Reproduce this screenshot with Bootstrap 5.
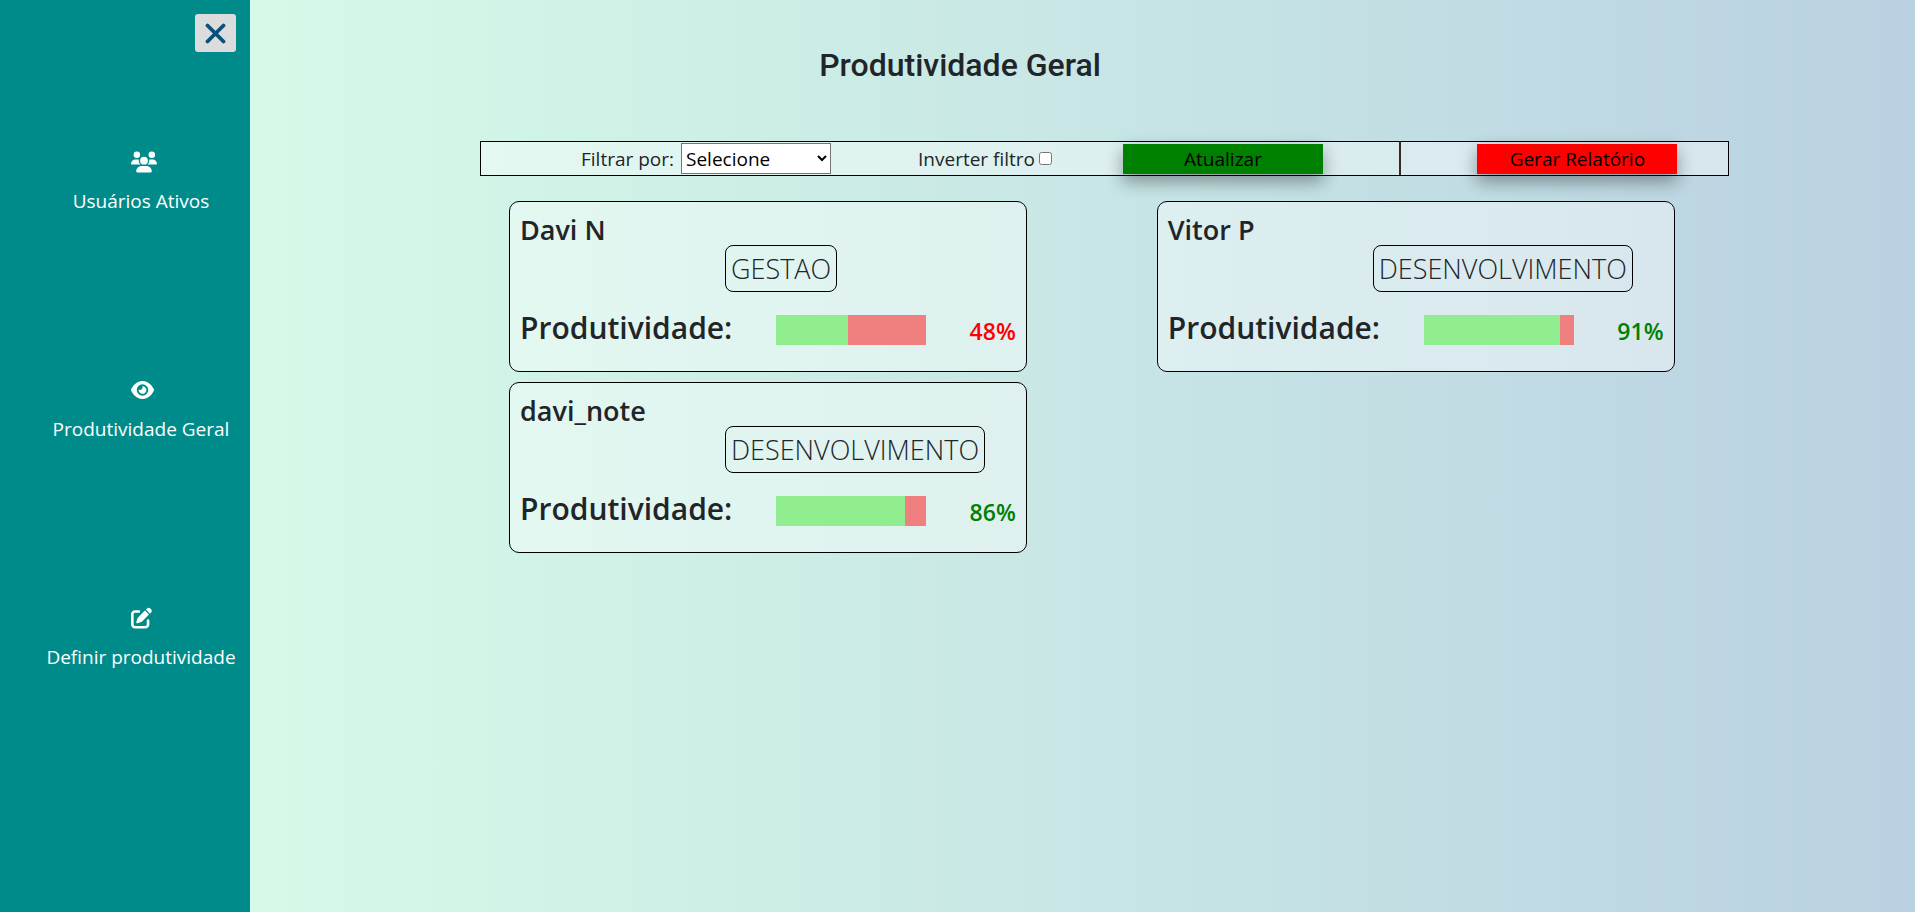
<!DOCTYPE html>
<html lang="pt-BR">
<head>
<meta charset="utf-8">
<meta name="viewport" content="width=device-width, initial-scale=1">
<title>Produtividade Geral</title>
<link href="https://cdn.jsdelivr.net/npm/bootstrap@5.3.0/dist/css/bootstrap.min.css" rel="stylesheet">
<style>
  body { font-family: "Open Sans", "Noto Sans", sans-serif; color: #212529; }
  .app-shell { min-height: 100vh; }
  .side-panel { width: 250px; background: #008b8b; padding: 14px 14px 0; }
  .close-btn { width: 41px; height: 38px; background: #dcdcdc; border: 0; border-radius: 3px; color: #0b5078; }
  .side-links { margin-top: 98px; gap: 162px; padding-left: 32px; }
  .side-links a { color: #fff; font-size: 19px; line-height: 30px; gap: 12px; white-space: nowrap; }
  .link-icon { width: 20px; height: 24px; }
  .link-icon svg { height: 24px; flex: none; }
  .board { min-width: 0; background: linear-gradient(to right, #d5fae8, #c6e4e5 55%, #bad1e1); }
  .page-title { font-family: Roboto, sans-serif; font-size: 32px; font-weight: 500; line-height: 38px; margin: 46px 0 57px; padding-right: 245px; }
  .filter-bar { margin-left: 230px; width: 75%; height: 35px; border: 1px solid #000; background: rgba(255,255,255,.4); font-size: 19px; line-height: 30px; }
  .filter-main { border-right: 2px solid #3d2828; padding: 0 76px 0 100px; }
  .plain-select { width: 150px; height: 31px; margin-left: 7px; border: 1px solid #767676; border-radius: 0; background: #fff; color: #000; font-size: 19px; line-height: 24px; padding: 0; }
  .invert-group { margin: 0 71px 0 87px; }
  .flat-btn { width: 200px; height: 30px; border: 0; color: #000; line-height: 30px; padding: 0; box-shadow: 0 8px 16px rgba(0,0,0,.25), 0 6px 20px rgba(0,0,0,.15); }
  .btn-update { background: #008000; }
  .btn-report { background: #f00; }
  .filter-report { padding-left: 26px; }
  .people { margin: 25px 0 0 259px; width: 70%; display: grid; grid-template-columns: 1fr 1fr; gap: 10px 130px; }
  .person { border: 1px solid #000; border-radius: 10px; background: rgba(255,255,255,.4); padding: 12px 10px 24px; }
  .person h2 { font-size: 27px; font-weight: 600; line-height: 31px; margin: 0; }
  .sector { width: fit-content; margin-left: 205px; border: 1px solid #000; border-radius: 8px; font-size: 27px; font-weight: 300; line-height: 33px; padding: 6px 5px; }
  .score { margin-top: 23px; }
  .score h3 { font-size: 30px; font-weight: 600; line-height: 26px; margin: 0; }
  .meter { width: 150px; height: 30px; background: #f08080; }
  .meter-fill { height: 100%; background: #90ee90; }
  .pct { font-size: 23px; font-weight: 600; line-height: 32px; }
  .low { color: #f00; }
  .high { color: #008000; }
</style>
</head>
<body>
<div class="app-shell d-flex">
  <nav class="side-panel flex-shrink-0 d-flex flex-column">
    <button class="close-btn align-self-end d-flex align-items-center justify-content-center p-0" type="button" aria-label="Fechar">
      <svg width="21" height="21" viewBox="0 0 21 21" fill="none" stroke="currentColor" stroke-width="3.8" stroke-linecap="round"><path d="M2.500 2.500l16 16M18.500 2.500l-16 16"/></svg>
    </button>
    <div class="side-links d-flex flex-column align-items-center">
      <a class="d-flex flex-column align-items-center text-decoration-none" href="#">
        <span class="link-icon d-flex"><svg width="26" viewBox="0 0 640 512" fill="#fff"><path d="M144 0a80 80 0 1 1 0 160A80 80 0 1 1 144 0zM512 0a80 80 0 1 1 0 160A80 80 0 1 1 512 0zM0 298.7C0 239.8 47.800 192 106.700 192h42.700c15.900 0 31 3.500 44.600 9.700c-1.300 7.200-1.900 14.700-1.900 22.300c0 38.200 16.800 72.500 43.300 96H21.300C9.600 320 0 310.400 0 298.700zM405.300 320c26.600-23.500 43.300-57.800 43.300-96c0-7.600-.7-15-1.900-22.300c13.600-6.300 28.700-9.700 44.600-9.700h42.700C592.200 192 640 239.800 640 298.700c0 11.800-9.600 21.300-21.300 21.300zM224 224a96 96 0 1 1 192 0a96 96 0 1 1-192 0zM128 485.300C128 411.700 187.700 352 261.300 352h117.300C452.300 352 512 411.700 512 485.300c0 14.700-11.900 26.700-26.700 26.700H154.700c-14.700 0-26.700-11.900-26.700-26.700z"/></svg></span>
        <span>Usuários Ativos</span>
      </a>
      <a class="d-flex flex-column align-items-center text-decoration-none" href="#">
        <span class="link-icon d-flex"><svg width="23" viewBox="0 0 576 512" fill="#fff"><path d="M288 32c-80.800 0-145.500 36.800-192.600 80.600C48.600 156 17.300 208 2.500 243.700c-3.300 7.900-3.300 16.700 0 24.600C17.300 304 48.600 356 95.400 399.400C142.500 443.200 207.200 480 288 480s145.500-36.800 192.600-80.600c46.800-43.500 78.100-95.400 93-131.100c3.300-7.900 3.300-16.700 0-24.600c-14.900-35.700-46.200-87.700-93-131.100C433.500 68.800 368.800 32 288 32zM144 256a144 144 0 1 1 288 0 144 144 0 1 1-288 0zm144-64c0 35.300-28.700 64-64 64c-7.100 0-13.900-1.200-20.300-3.300c-5.500-1.800-11.900 1.600-11.700 7.400c.3 6.900 1.300 13.800 3.200 20.700c13.700 51.200 66.400 81.600 117.600 67.900s81.600-66.400 67.900-117.600c-11.100-41.500-47.800-69.400-88.600-71.100c-5.800-.2-9.200 6.100-7.400 11.700c2.100 6.400 3.300 13.200 3.300 20.300z"/></svg></span>
        <span>Produtividade Geral</span>
      </a>
      <a class="d-flex flex-column align-items-center text-decoration-none" href="#">
        <span class="link-icon d-flex"><svg width="21" viewBox="0 0 512 512" fill="#fff"><path d="M471.600 21.400c-21.900-21.900-57.300-21.900-79.200 0L362.300 51.700l97.900 97.900 30.100-30.100c21.900-21.900 21.900-57.300 0-79.200zM172.400 241.700c-6.100 6.100-10.800 13.600-13.500 21.900l-29.600 88.800c-2.900 8.600-.6 18.100 5.800 24.600s15.900 8.700 24.600 5.800l88.800-29.600c8.200-2.700 15.700-7.400 21.900-13.500L437.700 172.300 339.700 74.300zM96 64C43 64 0 107 0 160V416c0 53 43 96 96 96H352c53 0 96-43 96-96V320c0-17.700-14.300-32-32-32s-32 14.300-32 32v96c0 17.700-14.300 32-32 32H96c-17.700 0-32-14.300-32-32V160c0-17.700 14.300-32 32-32h96c17.700 0 32-14.300 32-32s-14.300-32-32-32z"/></svg></span>
        <span>Definir produtividade</span>
      </a>
    </div>
  </nav>
  <main class="board flex-grow-1">
    <h1 class="page-title text-center">Produtividade Geral</h1>
    <form class="filter-bar d-flex">
      <div class="filter-main d-flex align-items-center">
        <label for="filtro">Filtrar por:</label>
        <select class="plain-select" id="filtro"><option>Selecione</option></select>
        <div class="invert-group d-flex align-items-center">
          <label for="inverter">Inverter filtro</label>
          <input class="ms-1" type="checkbox" id="inverter">
        </div>
        <button class="flat-btn btn-update" type="button">Atualizar</button>
      </div>
      <div class="filter-report flex-grow-1 d-flex align-items-center justify-content-center">
        <button class="flat-btn btn-report" type="button">Gerar Relatório</button>
      </div>
    </form>
    <section class="people">
      <article class="person">
        <h2>Davi N</h2>
        <div class="sector">GESTAO</div>
        <div class="score d-flex justify-content-between">
          <h3>Produtividade:</h3>
          <div class="meter"><div class="meter-fill" style="width:48%"></div></div>
          <span class="pct low">48%</span>
        </div>
      </article>
      <article class="person">
        <h2>Vitor P</h2>
        <div class="sector">DESENVOLVIMENTO</div>
        <div class="score d-flex justify-content-between">
          <h3>Produtividade:</h3>
          <div class="meter"><div class="meter-fill" style="width:91%"></div></div>
          <span class="pct high">91%</span>
        </div>
      </article>
      <article class="person">
        <h2>davi_note</h2>
        <div class="sector">DESENVOLVIMENTO</div>
        <div class="score d-flex justify-content-between">
          <h3>Produtividade:</h3>
          <div class="meter"><div class="meter-fill" style="width:86%"></div></div>
          <span class="pct high">86%</span>
        </div>
      </article>
    </section>
  </main>
</div>
<script src="https://cdn.jsdelivr.net/npm/bootstrap@5.3.0/dist/js/bootstrap.bundle.min.js"></script>
</body>
</html>
